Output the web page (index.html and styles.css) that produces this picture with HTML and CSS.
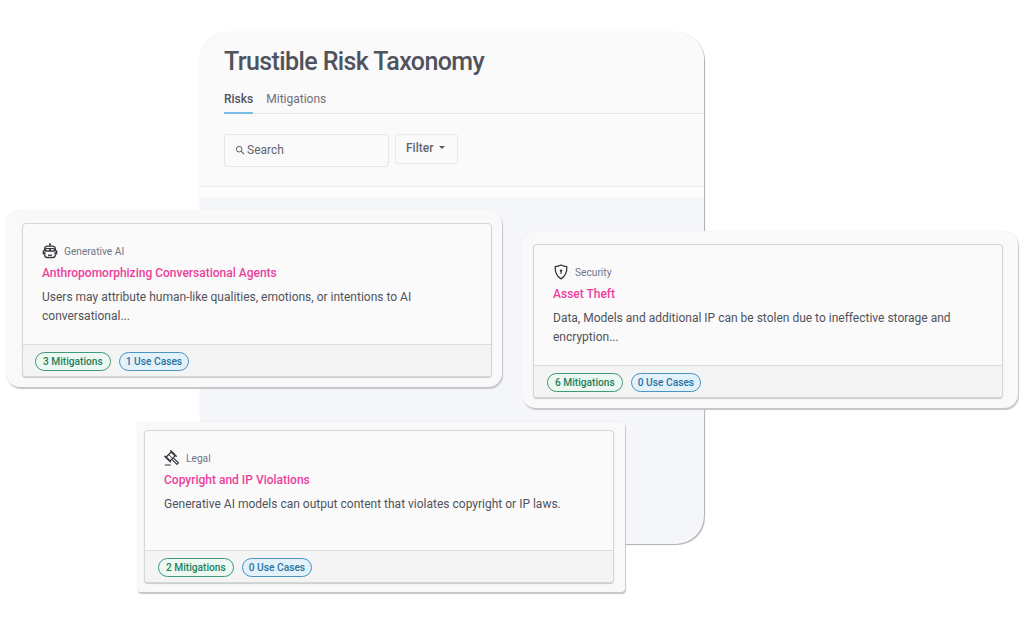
FILE: index.html
```html
<!DOCTYPE html>
<html lang="en">
<head>
<meta charset="utf-8">
<title>Trustible Risk Taxonomy</title>
<link rel="stylesheet" href="styles.css">
</head>
<body>
<main class="canvas">
  <section class="panel">
    <header class="panel-head">
      <h1 class="panel-title">Trustible Risk Taxonomy</h1>
      <nav class="tabs">
        <span class="tab tab-active">Risks</span>
        <span class="tab">Mitigations</span>
      </nav>
      <div class="toolbar">
        <div class="search">
          <svg class="search-icon" viewBox="0 0 12 12" width="10" height="10"><circle cx="5" cy="5" r="3.4" fill="none" stroke="#5b5f68" stroke-width="1.2"/><path d="M7.6 7.6 11 11" stroke="#5b5f68" stroke-width="1.4" fill="none"/></svg>
          <span>Search</span>
        </div>
        <div class="filter"><span>Filter</span><i class="caret"></i></div>
      </div>
    </header>
    <div class="panel-gap"></div>
  </section>

  <article class="shell shell-ai">
    <div class="card">
      <div class="card-body">
        <div class="cat">
          <svg class="cat-icon" viewBox="0 0 16 16" width="16" height="16"><circle cx="8" cy="1.300" r="1" fill="#33363d"/><path d="M8 1.500v2" stroke="#33363d" stroke-width="1"/><path d="M2.600 8V6.300C2.600 4.400 4 3.200 5.800 3.200h4.400c1.800 0 3.200 1.200 3.200 3.100V8" fill="none" stroke="#33363d" stroke-width="1.300"/><rect x="2.800" y="5" width="10.400" height="3.800" rx="1.600" fill="#33363d"/><rect x="4.300" y="6" width="2.800" height="1.300" fill="#eef0f2"/><rect x="8.900" y="6" width="2.800" height="1.300" fill="#eef0f2"/><rect x=".7" y="7.200" width="1.700" height="4.400" rx=".6" fill="#33363d"/><rect x="13.600" y="7.200" width="1.700" height="4.400" rx=".6" fill="#33363d"/><path d="M2.800 9v3.200c0 1.500 1 2.300 2.400 2.300h5.600c1.400 0 2.400-.8 2.400-2.300V9" fill="none" stroke="#33363d" stroke-width="1.300"/><rect x="6" y="11.600" width="4" height="1.300" fill="#33363d"/></svg>
          <span>Generative AI</span>
        </div>
        <h2 class="card-title">Anthropomorphizing Conversational Agents</h2>
        <p class="card-text">Users may attribute human-like qualities, emotions, or intentions to AI conversational...</p>
      </div>
      <footer class="card-foot"><span class="pill pill-green">3 Mitigations</span><span class="pill pill-blue">1 Use Cases</span></footer>
    </div>
  </article>

  <article class="shell shell-sec">
    <div class="card">
      <div class="card-body">
        <div class="cat">
          <svg class="cat-icon" viewBox="0 0 16 16" width="16" height="16"><path d="M8 1c2 1 3.800 1.500 5.800 1.700.2 5.200-1.300 9.500-5.800 12.200C3.500 12.200 2 7.900 2.200 2.700 4.200 2.500 6 2 8 1Z" fill="none" stroke="#33363d" stroke-width="1.300" stroke-linejoin="round"/><circle cx="8" cy="6.600" r="1.200" fill="#33363d"/><path d="M8 7v3" stroke="#33363d" stroke-width="1.100"/></svg>
          <span>Security</span>
        </div>
        <h2 class="card-title">Asset Theft</h2>
        <p class="card-text">Data, Models and additional IP can be stolen due to ineffective storage and encryption...</p>
      </div>
      <footer class="card-foot"><span class="pill pill-green">6 Mitigations</span><span class="pill pill-blue">0 Use Cases</span></footer>
    </div>
  </article>

  <article class="shell shell-legal">
    <div class="card">
      <div class="card-body">
        <div class="cat">
          <svg class="cat-icon" viewBox="0 0 16 16" width="16" height="16"><path d="M7.200 2 11 5.800 6 10.800 2.200 7Z" fill="none" stroke="#33363d" stroke-width="1.200" stroke-linejoin="round"/><path d="M6.800 .8l5.400 5.400M1 6.400l5.400 5.400" stroke="#33363d" stroke-width="1.500" stroke-linecap="round"/><path d="M4.800 4.600l3.600 3.600" stroke="#33363d" stroke-width="1"/><path d="M9.400 7.800l5 5-1.500 1.500-5-5" fill="none" stroke="#33363d" stroke-width="1.200" stroke-linejoin="round"/><path d="M.8 15h6" stroke="#33363d" stroke-width="1.200"/></svg>
          <span>Legal</span>
        </div>
        <h2 class="card-title">Copyright and IP Violations</h2>
        <p class="card-text">Generative AI models can output content that violates copyright or IP laws.</p>
      </div>
      <footer class="card-foot"><span class="pill pill-green">2 Mitigations</span><span class="pill pill-blue">0 Use Cases</span></footer>
    </div>
  </article>
</main>
</body>
</html>
```

FILE: styles.css
```css
* { box-sizing: border-box; }

html, body {
  margin: 0;
  height: 100%;
  background: #fff;
  overflow: hidden;
}

body {
  font-family: Roboto, "Noto Sans", sans-serif;
  color: #4a4d55;
}

.canvas {
  position: relative;
  width: 1024px;
  height: 623px;
}

/* Back panel */
.panel {
  position: absolute;
  left: 200px;
  top: 32px;
  width: 504px;
  height: 512px;
  display: flex;
  flex-direction: column;
  background: #f5f6fa;
  border-radius: 28px;
  overflow: hidden;
  box-shadow: 1px 1px 1px #aeafb1, 0 0 1px #d4d5d7;
}

.panel-head {
  height: 155px;
  padding: 11px 0 0 24px;
  background: #fafafa;
  border-bottom: 1px solid #ebebed;
}

.panel-title {
  margin: 0;
  font-size: 25px;
  line-height: 38px;
  font-weight: 500;
  letter-spacing: -0.6px;
  color: #50535c;
}

.tabs {
  display: flex;
  gap: 13px;
  margin-top: 5px;
  height: 28px;
  padding-top: 5px;
  border-bottom: 1px solid #e6e7ea;
}

.tab {
  height: 23px;
  font-size: 12px;
  line-height: 17px;
  color: #6d7078;
}

.tab-active {
  font-weight: 500;
  color: #50535c;
  border-bottom: 2px solid #7cbde4;
}

.toolbar {
  display: flex;
  align-items: flex-start;
  gap: 6px;
  margin-top: 20px;
}

.search {
  display: flex;
  align-items: center;
  gap: 2px;
  width: 165px;
  height: 33px;
  padding: 0 0 2px 10px;
  border: 1px solid #e4e6ea;
  border-radius: 3px;
  font-size: 12px;
  color: #62656d;
}

.filter {
  display: flex;
  align-items: center;
  gap: 6px;
  width: 63px;
  height: 30px;
  padding: 0 0 3px 10px;
  border: 1px solid #e8e9ec;
  border-radius: 3px;
  font-size: 12px;
  font-weight: 500;
  color: #62656d;
}

.caret {
  width: 0;
  height: 0;
  border: 3.500px solid transparent;
  border-top: 3.500px solid #55585f;
  border-bottom: 0;
}

.panel-gap {
  height: 10px;
  background: #fdfdfe;
}

/* Floating cards */
.shell {
  position: absolute;
  background: #f9f9f9;
  box-shadow: 1px 2px 1px #c6c7c9, 0 0 1px #dcdcdc;
}

.shell-ai {
  left: 6px;
  top: 210px;
  width: 496px;
  height: 177px;
  padding: 13px 10px 10px 16px;
  border-radius: 14px;
}

.shell-sec {
  left: 522px;
  top: 231px;
  width: 496px;
  height: 177px;
  padding: 13px 15px 10px 11px;
  border-radius: 14px;
}

.shell-legal {
  left: 137px;
  top: 422px;
  width: 488px;
  height: 170px;
  padding: 8px 11px 9px 7px;
  border-radius: 4px;
}

.card {
  display: flex;
  flex-direction: column;
  height: 100%;
  background: #fafafa;
  border: 1px solid #d5d6d8;
  border-radius: 4px;
  box-shadow: 0 1px 1px #c9cacc;
  overflow: hidden;
}

.card-body {
  flex: 1;
  padding: 18px 12px 0 19px;
}

.cat {
  display: flex;
  align-items: center;
  gap: 6px;
  height: 18px;
  font-size: 10.200px;
  color: #6f7488;
}

.cat-icon { flex: none; }

.card-title {
  margin: 4px 0 0;
  font-size: 12px;
  line-height: 18px;
  font-weight: 500;
  color: #ec3f9c;
}

.card-text {
  margin: 6px 0 0;
  font-size: 12px;
  line-height: 19px;
  color: #50535a;
}

.card-foot {
  display: flex;
  flex: none;
  align-items: center;
  gap: 8px;
  height: 32px;
  padding: 2px 0 0 12px;
  background: #f4f4f4;
  border-top: 1px solid #dcdcde;
}

.shell-sec .card-foot,
.shell-legal .card-foot {
  padding-left: 13px;
}

.pill {
  display: block;
  height: 19px;
  padding: 0 7px;
  border-radius: 10px;
  font-size: 10.200px;
  line-height: 17px;
  font-weight: 500;
}

.pill-green {
  color: #1f7f5c;
  background: #edf8f3;
  border: 1px solid #3f9a78;
}

.pill-blue {
  padding: 0 6px;
  color: #26749f;
  background: #e3f1fb;
  border: 1px solid #4a94c4;
}
```
